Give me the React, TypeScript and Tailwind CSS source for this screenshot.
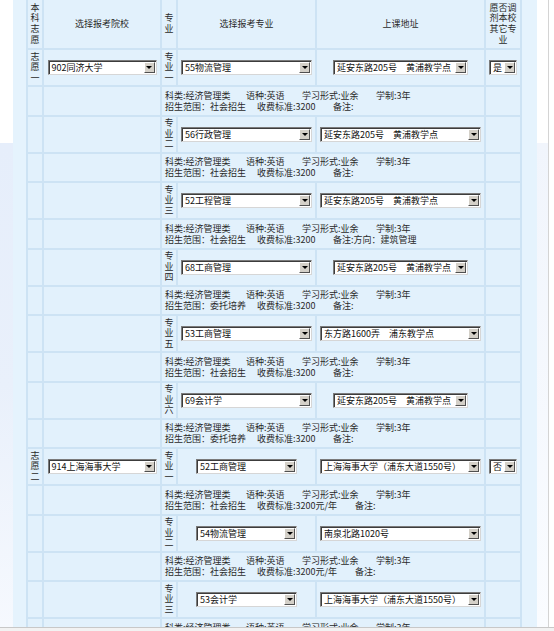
import React from "react";

const GRID = "grid grid-cols-[14px_116px_14px_137px_167px_34px] gap-x-[2px]";
const CELL = "bg-[#e2f1fc]";

function Vert({ chars }: { chars: string }) {
  return <div className="w-[9px] text-[9px] leading-[10.6px] break-all text-center">{chars}</div>;
}

function Sel({ text, w }: { text: string; w: string }) {
  return (
    <div
      className={
        "flex h-[15px] bg-white border border-t-[#7b7b7b] border-l-[#7b7b7b] border-r-[#d6d6d6] border-b-[#d6d6d6] shadow-[inset_1px_1px_0_#3c3c3c] " +
        w
      }
    >
      <span className="pl-[3px] pt-[1px] text-[9px] leading-[12px] whitespace-nowrap overflow-hidden flex-1 text-[#111]">
        {text}
      </span>
      <div className="my-[1px] mr-[1px] w-[11px] shrink-0 bg-[#d4d0c8] border border-t-white border-l-white border-r-[#505050] border-b-[#505050] flex items-center justify-center">
        <div className="w-0 h-0 border-x-[3px] border-x-transparent border-t-[3px] border-t-black" />
      </div>
    </div>
  );
}

type Major = {
  label: string;
  name: string;
  addr: string;
  addrWide: boolean;
  scope: string;
  fee: string;
  note: string;
};

type Group = {
  vol: string;
  school: string;
  yes: string;
  majorW: string;
  feeW: string;
  majors: Major[];
};

const ADDR1 = "延安东路205号　黄浦教学点";
const ADDR2 = "东方路1600弄　浦东教学点";
const ADDR3 = "上海海事大学（浦东大道1550号）";
const ADDR4 = "南泉北路1020号";

const groups: Group[] = [
  {
    vol: "志愿一",
    school: "902同济大学",
    yes: "是",
    majorW: "w-[131px]",
    feeW: "w-[76px]",
    majors: [
      { label: "专业一", name: "55物流管理", addr: ADDR1, addrWide: false, scope: "社会招生", fee: "3200", note: "" },
      { label: "专业二", name: "56行政管理", addr: ADDR1, addrWide: true, scope: "社会招生", fee: "3200", note: "" },
      { label: "专业三", name: "52工程管理", addr: ADDR1, addrWide: true, scope: "社会招生", fee: "3200", note: "方向：建筑管理" },
      { label: "专业四", name: "68工商管理", addr: ADDR1, addrWide: false, scope: "委托培养", fee: "3200", note: "" },
      { label: "专业五", name: "53工商管理", addr: ADDR2, addrWide: true, scope: "社会招生", fee: "3200", note: "" },
      { label: "专业六", name: "69会计学", addr: ADDR1, addrWide: false, scope: "委托培养", fee: "3200", note: "" },
    ],
  },
  {
    vol: "志愿二",
    school: "914上海海事大学",
    yes: "否",
    majorW: "w-[101px]",
    feeW: "w-[98px]",
    majors: [
      { label: "专业一", name: "52工商管理", addr: ADDR3, addrWide: true, scope: "社会招生", fee: "3200元/年", note: "" },
      { label: "专业二", name: "54物流管理", addr: ADDR4, addrWide: true, scope: "社会招生", fee: "3200元/年", note: "" },
      { label: "专业三", name: "53会计学", addr: ADDR3, addrWide: true, scope: "社会招生", fee: "3200元/年", note: "" },
    ],
  },
];

function HeaderRow() {
  return (
    <div className={GRID + " h-[48px]"}>
      <div className={CELL + " flex items-center justify-center"}>
        <Vert chars="本科志愿" />
      </div>
      <div className={CELL + " flex items-center justify-center text-[9px]"}>选择报考院校</div>
      <div className={CELL + " flex items-center justify-center"}>
        <Vert chars="专业" />
      </div>
      <div className={CELL + " flex items-center justify-center text-[9px]"}>选择报考专业</div>
      <div className={CELL + " flex items-center justify-center text-[9px]"}>上课地址</div>
      <div className={CELL + " flex items-center justify-center"}>
        <div className="w-[27px] text-[9px] leading-[10.6px] break-all text-center">愿否调剂本校其它专业</div>
      </div>
    </div>
  );
}

function MajorRow({ g, m, first }: { g: Group; m: Major; first: boolean }) {
  return (
    <div className={GRID + " h-[35px]"}>
      <div className={CELL + " flex items-center justify-center"}>{first && <Vert chars={g.vol} />}</div>
      <div className={CELL + " flex items-center justify-center"}>{first && <Sel text={g.school} w="w-[109px]" />}</div>
      <div className={CELL + " flex items-center justify-center"}>
        <Vert chars={m.label} />
      </div>
      <div className={CELL + " flex items-center justify-center"}>
        <Sel text={m.name} w={g.majorW} />
      </div>
      <div className={CELL + " flex items-center justify-center"}>
        <Sel text={m.addr} w={m.addrWide ? "w-[161px]" : "w-[135px]"} />
      </div>
      <div className={CELL + " flex items-center justify-center"}>{first && <Sel text={g.yes} w="w-[28px]" />}</div>
    </div>
  );
}

function InfoRow({ g, m }: { g: Group; m: Major }) {
  return (
    <div className={GRID + " h-[27.5px]"}>
      <div className={CELL} />
      <div className={CELL} />
      <div className={CELL + " col-span-3 flex flex-col justify-center pl-[3px] text-[9px] leading-[11px] whitespace-nowrap"}>
        <div className="flex">
          <span className="w-[81px]">科类:经济管理类</span>
          <span className="w-[56px]">语种:英语</span>
          <span className="w-[74px]">学习形式:业余</span>
          <span>学制:3年</span>
        </div>
        <div className="flex">
          <span className="w-[92px]">招生范围：{m.scope}</span>
          <span className={g.feeW}>收费标准:{m.fee}</span>
          <span>备注:{m.note}</span>
        </div>
      </div>
      <div className={CELL} />
    </div>
  );
}

export default function App() {
  return (
    <div className="w-[554px] h-[631px] flex flex-col overflow-hidden bg-white font-['Noto_Sans_CJK_SC',sans-serif] text-[#2a2a2a]">
      <div className="flex h-[627px] overflow-hidden">
        <div className="w-[13px] flex flex-col shrink-0">
          <div className="h-[143px] bg-white" />
          <div className="flex-1 bg-gradient-to-b from-[#e6eefb] via-[#e9f0fb] to-[#f6f9fe]" />
        </div>
        <div className="flex shrink-0 bg-[#e5f3fd] pl-[13px] pr-[15px]">
          <div className="w-[496px] self-start flex flex-col gap-y-[2px] bg-[#cde3f4] px-[2px] pb-[2px]">
            <HeaderRow />
            {groups.map((g) =>
              g.majors.map((m, i) => (
                <React.Fragment key={g.vol + i}>
                  <MajorRow g={g} m={m} first={i === 0} />
                  <InfoRow g={g} m={m} />
                </React.Fragment>
              ))
            )}
          </div>
        </div>
        <div className="w-[11px] flex flex-col shrink-0">
          <div className="h-[143px] bg-white" />
          <div className="flex-1 bg-gradient-to-b from-[#f1f5fc] to-[#fafcff]" />
        </div>
        <div className="w-[1px] bg-[#d4d4d4] shrink-0" />
        <div className="flex-1 bg-white" />
      </div>
      <div className="h-[1px] bg-[#c8c8c8]" />
      <div className="flex-1 bg-[#f2f2f2]" />
    </div>
  );
}
